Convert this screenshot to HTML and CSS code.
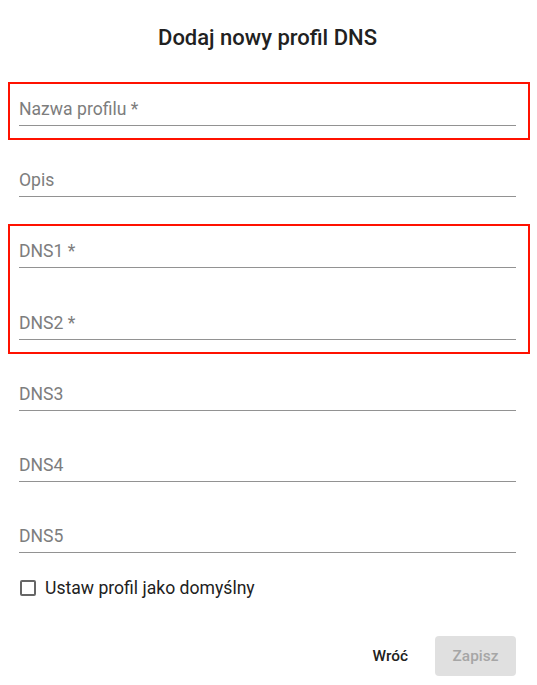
FILE: index.html
```html
<!DOCTYPE html>
<html lang="pl">
<head>
    <meta charset="UTF-8">
    <meta name="viewport" content="width=device-width, initial-scale=1.0">
    <title>Dodaj nowy profil DNS</title>
    <link rel="stylesheet" href="styles.css">
</head>
<body>
    <div class="dialog">
        <h2 class="dialog-title">Dodaj nowy profil DNS</h2>

        <div class="fields">
            <div class="marked">
                <div class="field"><label>Nazwa profilu *</label><div class="line"></div></div>
            </div>
            <div class="field"><label>Opis</label><div class="line"></div></div>
            <div class="marked">
                <div class="field"><label>DNS1 *</label><div class="line"></div></div>
                <div class="field"><label>DNS2 *</label><div class="line"></div></div>
            </div>
            <div class="field"><label>DNS3</label><div class="line"></div></div>
            <div class="field"><label>DNS4</label><div class="line"></div></div>
            <div class="field"><label>DNS5</label><div class="line"></div></div>
        </div>

        <label class="check-row">
            <span class="check-box"></span>
            <span>Ustaw profil jako domyślny</span>
        </label>

        <div class="actions">
            <button class="btn">Wróć</button>
            <button class="btn btn-disabled" disabled>Zapisz</button>
        </div>
    </div>
</body>
</html>
```

FILE: styles.css
```css
body {
    margin: 0;
    background: #fff;
    font-family: Roboto, "Liberation Sans", sans-serif;
    color: #212121;
}
.dialog {
    padding: 22px 21px 0 19px;
}
.dialog-title {
    margin: 0 0 30px;
    font-size: 22px;
    font-weight: 500;
    line-height: 32px;
    text-align: center;
}
.fields {
    display: flex;
    flex-direction: column;
    gap: 17.2px;
}
.marked {
    display: flex;
    flex-direction: column;
    gap: 17.2px;
    margin: 0 -12px 0 -9px;
    padding: 0 12px 0 9px;
    outline: 2px solid #ff1100;
}
.field {
    height: 54px;
    padding-top: 15px;
    box-sizing: border-box;
}
.field label {
    display: block;
    font-size: 17.6px;
    line-height: 20px;
    color: #7d7d7d;
}
.line {
    height: 1px;
    margin-top: 6px;
    background: #929292;
}
.check-row {
    display: flex;
    align-items: center;
    gap: 9px;
    height: 24px;
    margin-top: 11px;
    font-size: 17.6px;
    color: #212121;
}
.check-box {
    width: 16px;
    height: 16px;
    margin-left: 1px;
    box-sizing: border-box;
    border: 2px solid #666;
    border-radius: 2px;
}
.actions {
    display: flex;
    justify-content: flex-end;
    gap: 11px;
    margin-top: 36px;
}
.btn {
    height: 40px;
    padding: 0 16px;
    border: none;
    border-radius: 4px;
    background: transparent;
    font-family: inherit;
    font-size: 15.4px;
    font-weight: 500;
    color: #212121;
    cursor: pointer;
}
.btn-disabled {
    width: 81px;
    padding: 0;
    background: #e0e0e0;
    color: #a6a6a6;
    cursor: default;
}
```
